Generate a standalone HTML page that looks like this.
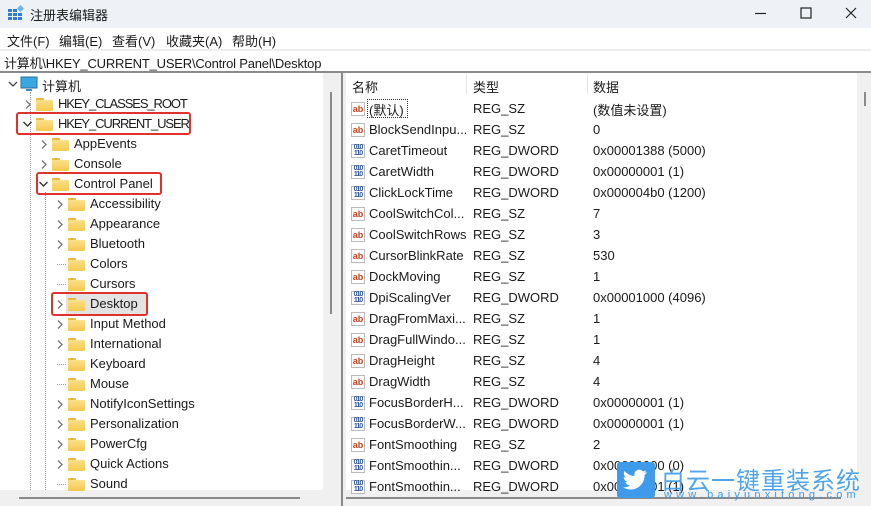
<!DOCTYPE html>
<html><head><meta charset="utf-8"><style>
*{margin:0;padding:0;box-sizing:border-box}
body{width:871px;height:506px;overflow:hidden;background:#fff;font-family:"Liberation Sans","Noto Sans CJK SC",sans-serif;font-size:13px;color:#1a1a1a;position:relative}
.abs{position:absolute;white-space:nowrap}
.title{left:0;top:0;width:871px;height:28px;background:#eef2f7}
.fold{position:absolute;width:17px;height:13px}
.fold:before{content:"";position:absolute;left:0;top:0;width:8px;height:4px;background:#e8b93a;border-radius:1px}
.fold:after{content:"";position:absolute;left:0;top:2px;width:17px;height:11px;background:linear-gradient(#fbe08a,#f4c94f);border-radius:1px}
.red{position:absolute;border:2.5px solid #e0312c;border-radius:3px}
.ic{position:absolute;width:14px;height:14px;font-size:9px;font-weight:bold;line-height:13px;text-align:center;border:1px solid #bbb;background:#fff}
.ab{color:#c8401e}
.dw{color:#2b55a8;font-size:7px;line-height:6px;letter-spacing:-1px}
</style></head><body>
<div class="abs title"></div>
<svg class="abs" style="left:8px;top:5px" width="16" height="16"><g fill="#2a7fd4"><rect x="0" y="4" width="4" height="3"/><rect x="5" y="4" width="4" height="3"/><rect x="0" y="8" width="4" height="3"/><rect x="5" y="8" width="4" height="3"/><rect x="10" y="8" width="4" height="3"/><rect x="0" y="12" width="4" height="3"/><rect x="5" y="12" width="4" height="3"/><rect x="10" y="12" width="4" height="3"/></g><rect x="10" y="1" width="5" height="5" fill="#6cb6f0" transform="rotate(45 12.5 3.5)"/></svg>
<div class="abs" style="left:30px;top:5px;font-size:13px">注册表编辑器</div>
<svg class="abs" style="left:755px;top:6px" width="106" height="14" stroke="#222" stroke-width="1.2" fill="none"><path d="M0 7.5h11"/><rect x="46" y="2" width="10" height="10"/><path d="M91 2l10 10M101 2l-10 10"/></svg>
<div class="abs" style="left:7px;top:31px">文件(F)</div>
<div class="abs" style="left:59px;top:31px">编辑(E)</div>
<div class="abs" style="left:112px;top:31px">查看(V)</div>
<div class="abs" style="left:166px;top:31px">收藏夹(A)</div>
<div class="abs" style="left:232px;top:31px">帮助(H)</div>
<div class="abs" style="left:0;top:49px;width:871px;height:2px;background:#eee"></div>
<div class="abs" style="left:4px;top:53px;letter-spacing:-0.2px">计算机\HKEY_CURRENT_USER\Control Panel\Desktop</div>
<div class="abs" style="left:0;top:71px;width:871px;height:2px;background:#8a8a8a"></div>
<!-- left pane -->
<div class="abs" style="left:323px;top:73px;width:14px;height:418px;background:#f0f0f0"></div>
<div class="abs" style="left:330px;top:92px;width:2px;height:222px;background:#8a8a8a"></div>
<div class="abs" style="left:337px;top:73px;width:4px;height:433px;background:#f0f0f0"></div>
<div class="abs" style="left:341px;top:73px;width:2px;height:433px;background:#888"></div>
<div class="abs" style="left:343px;top:73px;width:3px;height:433px;background:#f0f0f0"></div>
<div class="abs" style="left:0;top:490px;width:337px;height:16px;background:#f0f0f0"></div>
<div class="abs" style="left:19px;top:497px;width:281px;height:2px;background:#8a8a8a"></div>
<div class="abs" style="left:30px;top:92px;height:398px;border-left:1px dotted #999"></div>
<div class="abs" style="left:45px;top:192px;height:298px;border-left:1px dotted #999"></div>
<div class="abs" style="left:66px;top:294px;width:81px;height:20px;background:#e3e3e3"></div>

<div id="tree"></div>
<svg class="abs" style="left:20px;top:76px" width="18" height="17"><rect x="1" y="1" width="16" height="11" fill="#3aa7e0" stroke="#2a6f9e"/><rect x="6" y="13" width="6" height="2" fill="#3a8fc0"/></svg>
<div class="abs" style="left:42px;top:76px">计算机</div>
<div class="red" style="left:16px;top:112px;width:175px;height:23px"></div>
<div class="red" style="left:36px;top:172px;width:126px;height:23px"></div>
<div class="red" style="left:51px;top:292px;width:97px;height:24px"></div>
<!-- right -->
<div class="abs" style="left:466px;top:74px;width:1px;height:20px;background:#e5e5e5"></div>
<div class="abs" style="left:587px;top:74px;width:1px;height:20px;background:#e5e5e5"></div>
<div class="abs" style="left:352px;top:77px">名称</div>
<div class="abs" style="left:473px;top:77px">类型</div>
<div class="abs" style="left:593px;top:77px">数据</div>
<div class="abs" style="left:857px;top:73px;width:14px;height:433px;background:#f0f0f0"></div>
<div class="abs" style="left:864px;top:92px;width:2px;height:14px;background:#8a8a8a"></div>
<div class="abs" style="left:346px;top:490px;width:511px;height:16px;background:#f0f0f0"></div>
<div class="abs" style="left:346px;top:497px;width:495px;height:2px;background:#8a8a8a"></div>
<div id="rows"></div>
<div class="abs" style="left:367px;top:99px;width:41px;height:19px;border:1px dotted #333"></div>
<!-- watermark -->
<div class="abs" style="left:617px;top:462px;width:38px;height:36px;background:#3d9be9;border-radius:3px"></div>
<svg class="abs" style="left:621px;top:466px" width="30" height="28"><path d="M26 6c-1 .5-2 .7-3 .8 1-.6 2-1.5 2.3-2.6-1 .6-2 1-3.2 1.2A5 5 0 0 0 13.5 10 14 14 0 0 1 3.5 5a5 5 0 0 0 1.5 6.6c-.8 0-1.6-.3-2.3-.6 0 2.4 1.7 4.4 4 4.9-.7.2-1.5.2-2.3.1.6 2 2.5 3.4 4.7 3.5A10 10 0 0 1 2 21.3 14 14 0 0 0 9.6 23.5c9 0 14-7.5 14-14v-.6C24.6 8.2 25.4 7.2 26 6z" fill="#fff"/></svg>
<div class="abs" style="left:661px;top:461px;font-size:24px;color:#3d9be9;opacity:.9;letter-spacing:1px">白云一键重装系统</div>
<div class="abs" style="left:664px;top:489px;font-size:11px;color:#3d9be9;letter-spacing:4.2px">www.baiyunxitong.com</div>
<script>
var t=[[1,1,"HKEY_CLASSES_ROOT"],[1,2,"HKEY_CURRENT_USER"],[2,1,"AppEvents"],[2,1,"Console"],[2,2,"Control Panel"],[3,1,"Accessibility"],[3,1,"Appearance"],[3,1,"Bluetooth"],[3,0,"Colors"],[3,0,"Cursors"],[3,1,"Desktop"],[3,1,"Input Method"],[3,1,"International"],[3,0,"Keyboard"],[3,0,"Mouse"],[3,1,"NotifyIconSettings"],[3,1,"Personalization"],[3,1,"PowerCfg"],[3,1,"Quick Actions"],[3,0,"Sound"]];
var h='<svg class="abs" style="left:8px;top:80px" width="10" height="8"><path d="M1 2l4 4 4-4" stroke="#444" stroke-width="1.3" fill="none"/></svg>';
t.forEach(function(r,i){var y=96+i*20,l=r[0],cx=12+l*16;
if(r[1]==1)h+='<svg class="abs" style="left:'+(cx-4)+'px;top:'+(y+3)+'px" width="8" height="11"><path d="M2 1.5l4 4-4 4" stroke="#777" stroke-width="1.3" fill="none"/></svg>';
else if(r[1]==2)h+='<svg class="abs" style="left:'+(cx-6)+'px;top:'+(y+4)+'px" width="11" height="8"><path d="M1.5 2l4 4 4-4" stroke="#333" stroke-width="1.4" fill="none"/></svg>';
else h+='<div class="abs" style="left:'+(cx-3)+'px;top:'+(y+8)+'px;width:9px;border-top:1px dotted #999"></div>';
var ls=(l==1)?'letter-spacing:-1.1px;':'';
h+='<div class="fold" style="left:'+(cx+8)+'px;top:'+(y+2)+'px"></div><div class="abs" style="'+ls+'left:'+(cx+30)+'px;top:'+y+'px">'+r[2]+'</div>';});
document.getElementById('tree').innerHTML=h;
var R=[["a","(默认)","REG_SZ","(数值未设置)"],["a","BlockSendInpu...","REG_SZ","0"],["d","CaretTimeout","REG_DWORD","0x00001388 (5000)"],["d","CaretWidth","REG_DWORD","0x00000001 (1)"],["d","ClickLockTime","REG_DWORD","0x000004b0 (1200)"],["a","CoolSwitchCol...","REG_SZ","7"],["a","CoolSwitchRows","REG_SZ","3"],["a","CursorBlinkRate","REG_SZ","530"],["a","DockMoving","REG_SZ","1"],["d","DpiScalingVer","REG_DWORD","0x00001000 (4096)"],["a","DragFromMaxi...","REG_SZ","1"],["a","DragFullWindo...","REG_SZ","1"],["a","DragHeight","REG_SZ","4"],["a","DragWidth","REG_SZ","4"],["d","FocusBorderH...","REG_DWORD","0x00000001 (1)"],["d","FocusBorderW...","REG_DWORD","0x00000001 (1)"],["a","FontSmoothing","REG_SZ","2"],["d","FontSmoothin...","REG_DWORD","0x00000000 (0)"],["d","FontSmoothin...","REG_DWORD","0x00000001 (1)"]];
h='';R.forEach(function(r,i){var y=101+i*21;
h+=(r[0]=="a"?'<div class="ic ab" style="left:351px;top:'+(y+1)+'px">ab</div>':'<div class="ic dw" style="left:351px;top:'+(y+1)+'px">010<br>110</div>');
h+='<div class="abs" style="left:369px;top:'+(i==0?y-1:y)+'px">'+r[1]+'</div><div class="abs" style="left:473px;top:'+y+'px">'+r[2]+'</div><div class="abs" style="left:593px;top:'+(i==0?y-1:y)+'px">'+r[3]+'</div>';});
document.getElementById('rows').innerHTML=h;
</script>
</body></html>
